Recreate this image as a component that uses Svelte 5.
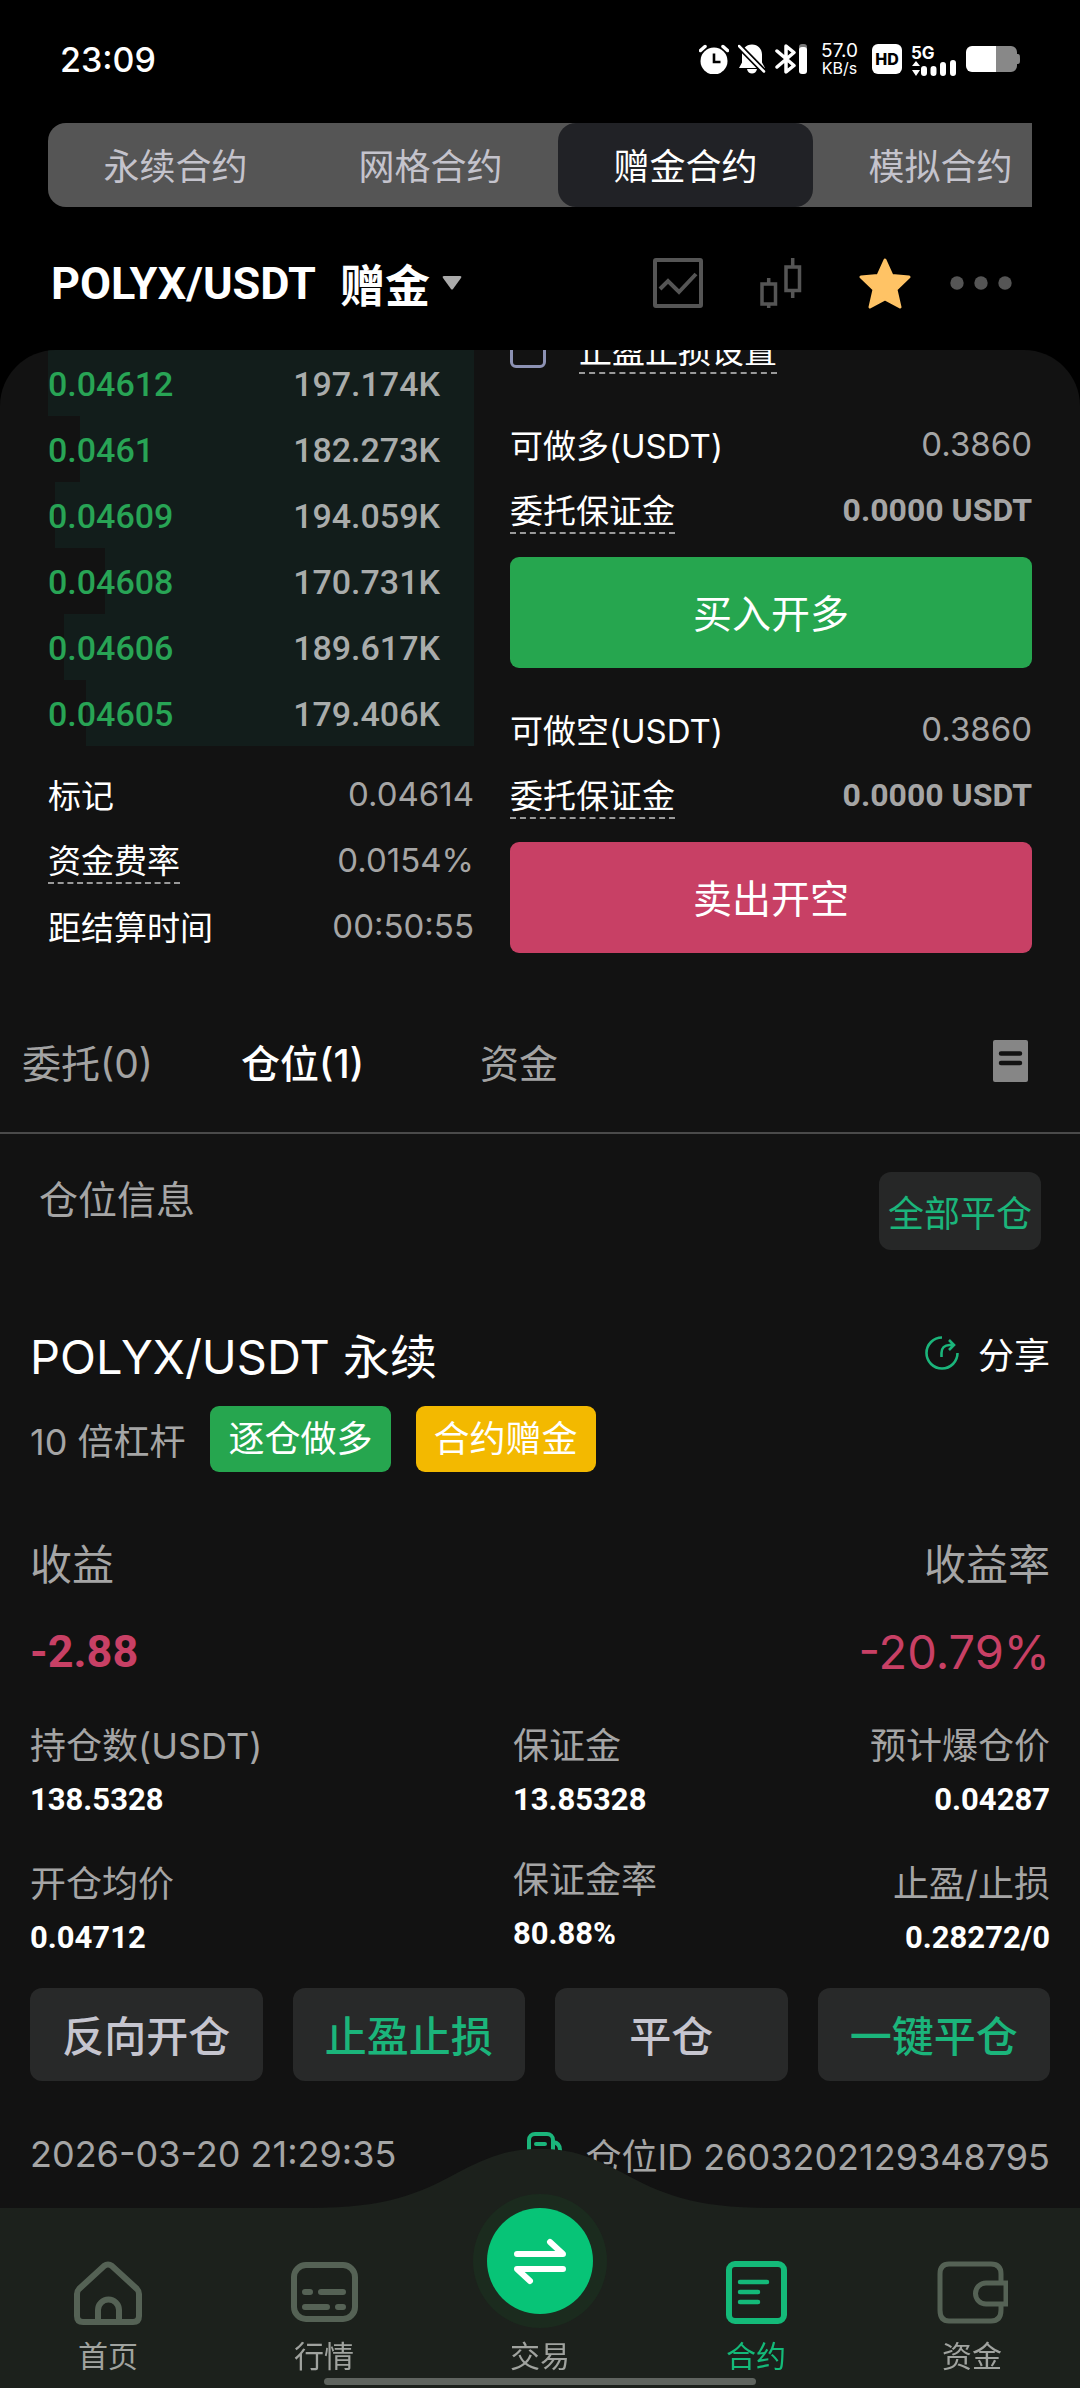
<script lang="ts">
    type Level = { price: string; volume: number };

    const modes = ["永续合约", "网格合约", "赠金合约", "模拟合约"];
    let mode = "赠金合约";

    const bids: Level[] = [
        { price: "0.04612", volume: 197.174 },
        { price: "0.0461", volume: 182.273 },
        { price: "0.04609", volume: 194.059 },
        { price: "0.04608", volume: 170.731 },
        { price: "0.04606", volume: 189.617 },
        { price: "0.04605", volume: 179.406 },
    ];
    const maxVolume = Math.max(...bids.map(b => b.volume));

    const stats = [
        { label: "标记", value: "0.04614", hint: false },
        { label: "资金费率", value: "0.0154%", hint: true },
        { label: "距结算时间", value: "00:50:55", hint: false },
    ];

    const sides = [
        { label: "可做多(USDT)", max: "0.3860", action: "买入开多", kind: "buy" },
        { label: "可做空(USDT)", max: "0.3860", action: "卖出开空", kind: "sell" },
    ];

    const lists = ["委托(0)", "仓位(1)", "资金"];
    let list = "仓位(1)";

    const columns = [
        [["持仓数(USDT)", "138.5328"], ["开仓均价", "0.04712"]],
        [["保证金", "13.85328"], ["保证金率", "80.88%"]],
        [["预计爆仓价", "0.04287"], ["止盈/止损", "0.28272/0"]],
    ];

    const actions = [
        { label: "反向开仓", accent: false },
        { label: "止盈止损", accent: true },
        { label: "平仓", accent: false },
        { label: "一键平仓", accent: true },
    ];

    let takeProfit = false;
</script>

<div class="screen">
    <header>
        <div class="status">
            <span class="clock">23:09</span>
            <div class="indicators">
                <svg width="30" height="30" viewBox="0 0 30 30">
                    <circle cx="15" cy="17" r="13.5" fill="#fff" />
                    <path d="M1.5 6.5 6 2.500M28.500 6.500 24 2.500" stroke="#fff" stroke-width="3.500" stroke-linecap="round" />
                    <path d="M15 9.500v8.500h6.500" fill="none" stroke="#000" stroke-width="2.600" />
                </svg>
                <svg width="28" height="30" viewBox="0 0 28 30">
                    <path d="M14 0.500c6 0 10 4.500 10 10v8l3 5.500H1l3-5.500v-8c0-5.500 4-10 10-10zM9 25h10c-1 6-9 6-10 0z" fill="#fff" />
                    <path d="M-1 0 27 28.500" stroke="#000" stroke-width="6" />
                    <path d="M1 2 26 27.500" stroke="#fff" stroke-width="2.500" stroke-linecap="round" />
                </svg>
                <svg width="32" height="30" viewBox="0 0 32 30">
                    <path d="M2 7 19 21.500 11 28V2l8 6.500L2 23" fill="none" stroke="#fff" stroke-width="3.500" stroke-linejoin="round" stroke-linecap="round" />
                    <rect x="24" y="0" width="8" height="12" rx="3" fill="#777" />
                    <rect x="24" y="3" width="8" height="27" rx="3" fill="#fff" />
                </svg>
                <span class="speed">57.0<br /><small>KB/s</small></span>
                <span class="hd">HD</span>
                <svg width="46" height="34" viewBox="0 -4 46 34">
                    <text x="0" y="13" class="net">5G</text>
                    <path d="M1 20h8l-4-5zM1 24h8l-4 6z" fill="#fff" />
                    <path d="M13 23v4M22.500 23v4M32 19v8M42 17v10" stroke="#fff" stroke-width="6" stroke-linecap="round" />
                </svg>
                <svg width="54" height="28" viewBox="0 0 54 28">
                    <path d="M30 1h15a6 6 0 0 1 6 6v2c3 0 3 1 3 5s0 5-3 5v2a6 6 0 0 1-6 6H30z" fill="#888" />
                    <path d="M30 1H6a6 6 0 0 0-6 6v14a6 6 0 0 0 6 6h24z" fill="#fff" />
                </svg>
            </div>
        </div>

        <nav class="modes">
            {#each modes as item}
                <button class:active={item === mode} on:click={() => (mode = item)}>{item}</button>
            {/each}
        </nav>

        <div class="pair">
            <button class="symbol">
                <span>POLYX/USDT</span>
                <span class="gift">赠金</span>
                <svg width="20" height="16" viewBox="0 0 20 16"><path d="M2 1h16q2 0 1 2l-8 11q-1 1-2 0L1 3Q0 1 2 1z" fill="#aaa" /></svg>
            </button>
            <div class="tools">
                <button aria-label="分时">
                    <svg width="50" height="50" viewBox="0 0 50 50" fill="none" stroke="#555" stroke-width="4">
                        <rect x="2" y="2" width="46" height="46" rx="1" />
                        <path d="m7 31 8-8 11 11 17-18" />
                    </svg>
                </button>
                <button aria-label="K线">
                    <svg width="42" height="50" viewBox="0 0 42 50" fill="none" stroke="#555" stroke-width="3.500">
                        <path d="M2 26h13.500v20H2zM8.700 20v5M8.700 47v4M26 9h13.500v23.500H26zM32.700 0v8M32.700 33v7" />
                    </svg>
                </button>
                <button aria-label="收藏">
                    <svg width="52" height="52" viewBox="0 0 52 52">
                        <path d="m26 3 7 15.500 17 1.500-13 12.500L41 50 26 42 11 50l4-17.500L2 20l17-1.500z" fill="#ffc365" stroke="#ffc365" stroke-width="3" stroke-linejoin="round" />
                    </svg>
                </button>
                <button aria-label="更多">
                    <svg width="62" height="14" viewBox="0 0 62 14" fill="#555">
                        <circle cx="7" cy="7" r="6.700" /><circle cx="31" cy="7" r="6.700" /><circle cx="55" cy="7" r="6.700" />
                    </svg>
                </button>
            </div>
        </div>
    </header>

    <main>
        <section class="trade">
            <div class="book">
                {#each bids as bid}
                    <div class="level">
                        <i style="width: {(bid.volume / maxVolume) * 100}%"></i>
                        <span class="price">{bid.price}</span>
                        <span>{bid.volume}K</span>
                    </div>
                {/each}
                <div class="stats">
                    {#each stats as stat}
                        <div class="line">
                            <span class:hint={stat.hint}>{stat.label}</span>
                            <span class="value">{stat.value}</span>
                        </div>
                    {/each}
                </div>
            </div>

            <div class="order">
                <label class="line stop">
                    <input type="checkbox" bind:checked={takeProfit} />
                    <span class="hint">止盈止损设置</span>
                </label>
                {#each sides as side}
                    <div class="side">
                        <div class="line"><span>{side.label}</span><span class="value">{side.max}</span></div>
                        <div class="line"><span class="hint">委托保证金</span><span class="value din">0.0000 USDT</span></div>
                        <button class="submit {side.kind}">{side.action}</button>
                    </div>
                {/each}
            </div>
        </section>

        <nav class="lists">
            {#each lists as item}
                <button class:active={item === list} on:click={() => (list = item)}>{item}</button>
            {/each}
            <button class="history" aria-label="历史记录">
                <svg width="36" height="42" viewBox="0 0 36 42">
                    <rect width="35" height="42" rx="2" fill="#868686" />
                    <path d="M8 13.500h19M8 23h19" stroke="#121212" stroke-width="4.500" stroke-linecap="round" />
                </svg>
            </button>
        </nav>

        <div class="info">
            <h2>仓位信息</h2>
            <button>全部平仓</button>
        </div>

        <article>
            <div class="row title">
                <h3>POLYX/USDT 永续</h3>
                <button class="share">
                    <svg width="36" height="36" viewBox="0 0 36 36" fill="none" stroke="#1bb57b" stroke-width="2.600">
                        <path d="M18 2.500A15.500 15.500 0 1 0 33.500 18" />
                        <path d="M17.500 22v-4c0-5 3-8 8-8h4M25 5l5 5-5 5" />
                    </svg>
                    分享
                </button>
            </div>
            <div class="tags">
                <span>10 倍杠杆</span>
                <b>逐仓做多</b>
                <b class="gold">合约赠金</b>
            </div>
            <div class="row caption"><span>收益</span><span>收益率</span></div>
            <div class="row profit"><span class="din">-2.88</span><span class="rate">-20.79%</span></div>
            <div class="figures">
                {#each columns as column}
                    <dl>
                        {#each column as [name, value]}
                            <div><dt>{name}</dt><dd>{value}</dd></div>
                        {/each}
                    </dl>
                {/each}
            </div>
            <div class="actions">
                {#each actions as action}
                    <button class:accent={action.accent}>{action.label}</button>
                {/each}
            </div>
            <div class="row meta">
                <time>2026-03-20 21:29:35</time>
                <span class="id">
                    <svg width="36" height="44" viewBox="0 0 36 44" fill="none" stroke="#1bb57b" stroke-width="4">
                        <rect x="2" y="2" width="24" height="34" rx="6" />
                        <path d="M9 12h9M26 10q7 1 7 8v16q0 6-6 6H12" stroke-linecap="round" />
                    </svg>
                    仓位ID 2603202129348795
                </span>
            </div>
        </article>
    </main>

    <nav class="dock">
        <svg class="hump" width="480" height="61" viewBox="0 0 480 61">
            <path d="M0 61v-1h10c78 0 110-15 147-35C190 8 208 1 240 1s50 7 83 24c37 20 69 35 147 35h10v1z" fill="#1c211c" />
        </svg>
        <a href="#home">
            <svg width="72" height="72" viewBox="0 0 72 72" fill="none" stroke="#556255" stroke-width="6">
                <path d="M32 9q4-3 8 0l25 23q2 2 2 5v22q0 6-6 6H11q-6 0-6-6V37q0-3 2-5z" />
                <path d="M26 64V53a10.500 10.500 0 0 1 21 0v11" />
            </svg>
            首页
        </a>
        <a href="#market">
            <svg width="72" height="72" viewBox="0 0 72 72" fill="none" stroke="#556255" stroke-width="6" stroke-linecap="round">
                <rect x="6" y="8" width="61" height="54" rx="12" />
                <path d="M17 35h5M33 35h22M17 50h22M50 50h5" />
            </svg>
            行情
        </a>
        <a href="#trade">
            <span class="swap">
                <svg width="54" height="48" viewBox="0 0 54 48" fill="none" stroke="#fff" stroke-width="6" stroke-linecap="round" stroke-linejoin="round">
                    <path d="M4 17h46L37 5M50 32H4l13 12" />
                </svg>
            </span>
            交易
        </a>
        <a href="#futures" class="active">
            <svg width="72" height="72" viewBox="0 0 72 72" fill="none" stroke="#14ba79" stroke-width="6">
                <rect x="9" y="7" width="55" height="57" rx="6" />
                <path d="M20 25h27M20 35h18M20 45h18" stroke-width="4.500" stroke-linecap="round" />
            </svg>
            合约
        </a>
        <a href="#assets">
            <svg width="72" height="72" viewBox="0 0 72 72" fill="none" stroke="#556255" stroke-width="5">
                <path d="M65 26v-9q0-10-10-10H13Q4 7 4 17v36q0 11 9 11h42q10 0 10-11v-7" />
                <path d="M70 26H50a10.500 10.500 0 0 0 0 21h20z" />
            </svg>
            资金
        </a>
        <div class="handle"></div>
    </nav>
</div>

<style>
    :global(body) {
        background: #000;
    }
    .screen {
        min-height: 100vh;
        background: #000;
        color: #fff;
        font-family: Inter, "Noto Sans CJK SC", sans-serif;
        font-size: 33px;
        display: flex;
        flex-direction: column;
    }
    * {
        box-sizing: border-box;
    }
    svg {
        display: block;
        flex: none;
    }
    button {
        border: 0;
        padding: 0;
        background: none;
        color: inherit;
        font: inherit;
        white-space: nowrap;
    }
    h2, h3, dl, dd {
        margin: 0;
        font-weight: 400;
    }
    .din, .level, dd, .symbol {
        font-family: Roboto, "Noto Sans CJK SC", sans-serif;
        font-weight: 700;
    }

    .status {
        display: flex;
        justify-content: space-between;
        align-items: center;
        height: 123px;
        padding: 0 60px 5px;
    }
    .clock {
        font-size: 34px;
        font-weight: 500;
    }
    .indicators {
        display: flex;
        align-items: center;
        gap: 9px;
    }
    .speed {
        padding: 0 5px;
        font-size: 19px;
        line-height: 17px;
        text-align: center;
    }
    .speed small {
        font-size: 16px;
    }
    .hd {
        width: 30px;
        border-radius: 6px;
        background: #fff;
        color: #000;
        font-size: 16px;
        font-weight: 800;
        line-height: 30px;
        text-align: center;
    }
    .net {
        fill: #fff;
        font-size: 17px;
        font-weight: 700;
    }

    .modes {
        display: flex;
        height: 84px;
        margin: 0 48px;
        overflow: hidden;
        border-radius: 18px 0 0 18px;
        background: #555;
    }
    .modes button {
        flex: none;
        width: 255px;
        padding-bottom: 2px;
        color: #c4c3cc;
        font-size: 36px;
    }
    .modes .active {
        border-radius: 18px;
        background: #212226;
        color: #fff;
    }

    .pair {
        display: flex;
        justify-content: space-between;
        align-items: center;
        height: 143px;
        padding: 9px 68px 0 51px;
    }
    .symbol {
        display: flex;
        align-items: center;
        font-size: 45px;
    }
    .gift {
        margin: 0 12px 0 24px;
    }
    .tools {
        display: flex;
        align-items: center;
        gap: 57px;
    }
    .tools button:last-child {
        margin-left: -18px;
    }

    main {
        flex: 1;
        padding-bottom: 200px;
        overflow: hidden;
        border-radius: 56px 56px 0 0;
        background: #121212;
    }
    .trade {
        display: grid;
        grid-template-columns: 426fr 522fr;
        gap: 36px;
        padding: 0 48px;
    }
    .level {
        position: relative;
        display: flex;
        justify-content: space-between;
        height: 66px;
        padding-right: 34px;
        color: #a9acab;
        font-size: 34px;
        font-weight: 500;
        line-height: 68px;
    }
    .level i {
        position: absolute;
        top: 0;
        right: 0;
        bottom: 0;
        background: #121d1b;
    }
    .level span {
        position: relative;
    }
    .level .price {
        color: #28a455;
    }
    .stats {
        padding-top: 15px;
    }
    .line {
        display: flex;
        justify-content: space-between;
        align-items: center;
        height: 66px;
    }
    .hint {
        padding-top: 4px;
        border-bottom: 2px dashed #999;
        line-height: 42px;
    }
    .value {
        color: #a5a5a5;
    }
    .value.din {
        font-size: 32px;
    }
    .order {
        display: flex;
        flex-direction: column;
        gap: 28px;
        margin-top: -33px;
    }
    .stop {
        justify-content: flex-start;
        gap: 33px;
    }
    .stop input {
        appearance: none;
        width: 36px;
        height: 36px;
        margin: 0;
        border: 3px solid #8d92b4;
        border-radius: 6px;
    }
    .submit {
        width: 100%;
        height: 111px;
        margin-top: 14px;
        padding-bottom: 4px;
        border-radius: 9px;
        font-size: 39px;
    }
    .side {
        display: flex;
        flex-direction: column;
    }
    .buy {
        background: #26a64f;
    }
    .sell {
        background: #c84065;
    }

    .lists {
        display: flex;
        align-items: center;
        gap: 88px;
        height: 144px;
        margin-top: 31px;
        padding: 0 51px 0 22px;
        border-bottom: 2px solid #4a4a4a;
        color: #a3a3a3;
        font-size: 39px;
    }
    .lists .active {
        margin-right: 28px;
        color: #fff;
        font-weight: 500;
    }
    .lists .history {
        margin-left: auto;
    }

    .info {
        display: flex;
        justify-content: space-between;
        align-items: flex-start;
        padding: 38px 39px 0;
    }
    .info h2 {
        color: #a5a5a5;
        font-size: 39px;
        line-height: 56px;
    }
    .info button {
        height: 78px;
        padding: 0 9px;
        border-radius: 12px;
        background: #262727;
        color: #1bb57b;
        font-size: 36px;
    }

    article {
        padding: 68px 30px 0;
    }
    .row {
        display: flex;
        justify-content: space-between;
        align-items: center;
    }
    .title {
        height: 70px;
    }
    h3 {
        font-size: 47px;
    }
    .share {
        display: flex;
        align-items: center;
        gap: 18px;
        font-size: 36px;
    }
    .tags {
        display: flex;
        align-items: center;
        gap: 25px;
        margin-top: 18px;
        color: #a5a5a5;
        font-size: 36px;
    }
    .tags b {
        padding: 0 18px;
        border-radius: 9px;
        background: #26a64f;
        color: #fff;
        font-weight: 400;
        line-height: 66px;
    }
    .tags .gold {
        background: #f3b900;
    }
    .caption {
        height: 90px;
        margin-top: 44px;
        color: #a5a5a5;
        font-size: 42px;
    }
    .profit {
        height: 90px;
        color: #c84065;
        font-size: 45px;
    }
    .rate {
        font-size: 47px;
    }
    .figures {
        display: grid;
        grid-template-columns: 482fr 268fr 268fr;
        margin-top: 23px;
    }
    dl {
        display: flex;
        flex-direction: column;
        gap: 30px;
        line-height: 54px;
    }
    dl:nth-child(2) {
        gap: 26px;
    }
    dl:last-child {
        text-align: right;
    }
    dt {
        color: #a5a5a5;
        font-size: 36px;
    }
    dd {
        font-size: 31px;
    }
    .actions {
        display: grid;
        grid-template-columns: repeat(4, 1fr);
        gap: 30px;
        margin-top: 23px;
    }
    .actions button {
        height: 93px;
        padding-bottom: 2px;
        border-radius: 12px;
        background: #282929;
        color: #c6c5cf;
        font-size: 42px;
        font-weight: 500;
    }
    .actions .accent {
        color: #1bb57b;
    }
    .meta {
        height: 54px;
        margin-top: 46px;
        color: #a5a5a5;
        font-size: 36px;
    }
    .id {
        display: flex;
        align-items: center;
        gap: 22px;
    }

    .dock {
        position: fixed;
        right: 0;
        bottom: 0;
        left: 0;
        display: grid;
        grid-template-columns: repeat(5, 1fr);
        height: 180px;
        padding-bottom: 19px;
        background: #1c211c;
    }
    .hump {
        position: absolute;
        bottom: 179px;
        left: calc(50% - 240px);
    }
    .dock a {
        position: relative;
        display: flex;
        flex-direction: column;
        justify-content: flex-end;
        align-items: center;
        gap: 9px;
        color: #a0a39f;
        font-size: 30px;
        line-height: 36px;
        text-decoration: none;
    }
    .dock .active {
        color: #14ba79;
    }
    .swap {
        display: grid;
        place-items: center;
        flex: none;
        width: 106px;
        height: 106px;
        margin-bottom: 15px;
        border-radius: 50%;
        background: #07c477;
        box-shadow: 0 0 0 14px #1b2b1e;
    }
    .handle {
        position: absolute;
        bottom: 3px;
        left: 30%;
        width: 40%;
        height: 7px;
        border-radius: 4px;
        background: #5f645f;
    }
</style>
